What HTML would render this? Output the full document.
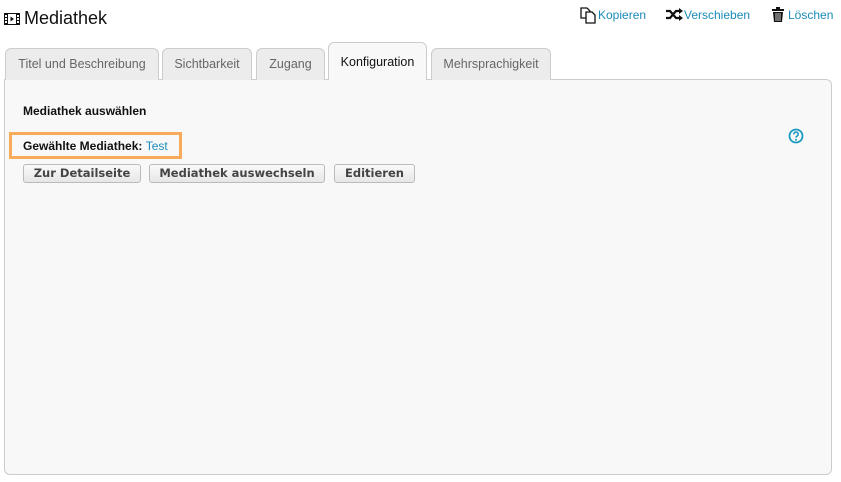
<!DOCTYPE html>
<html><head><meta charset="utf-8"><style>
*{margin:0;padding:0;box-sizing:border-box}
body{width:841px;height:482px;background:#fff;font-family:"Liberation Sans",Arial,sans-serif;position:relative;overflow:hidden}
.abs{position:absolute}
.title{left:24px;top:8px;font-size:18px;color:#111}
.act{top:8px;font-size:12px;color:#1a8bb8;white-space:nowrap}
.tab{position:absolute;top:48px;height:32px;border:1px solid #ccc;border-bottom:none;border-radius:6px 6px 0 0;background:#ececec;color:#666;font-size:12.5px;text-align:center;line-height:30px}
.panel{left:4px;top:79px;width:828px;height:396px;border:1px solid #ccc;border-radius:0 6px 6px 6px;background:#f8f8f8}
.btn{position:absolute;top:164px;height:19px;border:1px solid #bbb;border-radius:3px;background:linear-gradient(#fafafa,#e6e6e6);font-family:"DejaVu Sans",sans-serif;font-weight:bold;font-size:11.5px;color:#444;line-height:17px;text-align:center}
</style></head><body>
<svg class="abs" style="left:4px;top:13px" width="16" height="12" viewBox="0 0 16 12"><rect x="0.5" y="0.5" width="15" height="11" fill="#fff" stroke="#111"/><rect x="0" y="0" width="4" height="12" fill="#111"/><rect x="12" y="0" width="4" height="12" fill="#111"/><rect x="1" y="2" width="2" height="2" fill="#fff"/><rect x="1" y="5" width="2" height="2" fill="#fff"/><rect x="1" y="8" width="2" height="2" fill="#fff"/><rect x="13" y="2" width="2" height="2" fill="#fff"/><rect x="13" y="5" width="2" height="2" fill="#fff"/><rect x="13" y="8" width="2" height="2" fill="#fff"/><path d="M6.5 3.5 L10 6 L6.5 8.5Z" fill="#111"/></svg>
<div class="abs title">Mediathek</div>
<svg class="abs" style="left:580px;top:7px" width="16" height="17" viewBox="0 0 16 17"><path d="M1 1h6l3 3v7H1Z" fill="#fff" stroke="#111" stroke-width="1.3"/><path d="M6 5h6l3 3v8H6Z" fill="#fff" stroke="#111" stroke-width="1.3"/></svg>
<div class="abs act" style="left:598px">Kopieren</div>
<svg class="abs" style="left:666px;top:8px" width="17" height="13" viewBox="0 0 17 13"><path d="M0 3h4l6 7h4M0 10h4l6-7h4" fill="none" stroke="#111" stroke-width="2.2"/><path d="M13 0l4 3-4 3ZM13 7l4 3-4 3Z" fill="#111"/></svg>
<div class="abs act" style="left:684px">Verschieben</div>
<svg class="abs" style="left:772px;top:7px" width="12" height="15" viewBox="0 0 12 15"><rect x="0" y="2" width="12" height="2" fill="#111"/><rect x="4" y="0" width="4" height="2" fill="#111"/><path d="M1 5h10l-1 10H2Z" fill="#111"/><path d="M4 6v8M6 6v8M8 6v8" stroke="#fff" stroke-width="0.8"/></svg>
<div class="abs act" style="left:788px">Löschen</div>
<div class="abs panel"></div>
<div class="tab" style="left:5px;width:154px">Titel und Beschreibung</div>
<div class="tab" style="left:162px;width:90px">Sichtbarkeit</div>
<div class="tab" style="left:256px;width:69px">Zugang</div>
<div class="tab" style="left:328px;width:99px;top:42px;height:38px;background:#f8f8f8;color:#111;line-height:38px">Konfiguration</div>
<div class="tab" style="left:431px;width:120px">Mehrsprachigkeit</div>
<div class="abs" style="left:23px;top:104px;font-size:12px;font-weight:bold;color:#111">Mediathek auswählen</div>
<div class="abs" style="left:9px;top:132px;width:173px;height:27px;border:3px solid #f9ab5c"></div>
<div class="abs" style="left:23px;top:139px;font-size:12px;font-weight:bold;color:#111">Gewählte Mediathek: <span style="font-weight:normal;color:#1a8bb8">Test</span></div>
<svg class="abs" style="left:788px;top:128px" width="16" height="16" viewBox="0 0 16 16"><circle cx="8" cy="8" r="6.5" fill="none" stroke="#1a9ac0" stroke-width="1.8"/><path d="M5.8 6.3a2.2 2.2 0 1 1 2.9 2c-.6.3-.7.6-.7 1.3" fill="none" stroke="#1a9ac0" stroke-width="1.6"/><circle cx="8" cy="11.7" r="1" fill="#1a9ac0"/></svg>
<div class="btn" style="left:23px;width:118px">Zur Detailseite</div>
<div class="btn" style="left:149px;width:176px">Mediathek auswechseln</div>
<div class="btn" style="left:334px;width:81px">Editieren</div>
</body></html>
